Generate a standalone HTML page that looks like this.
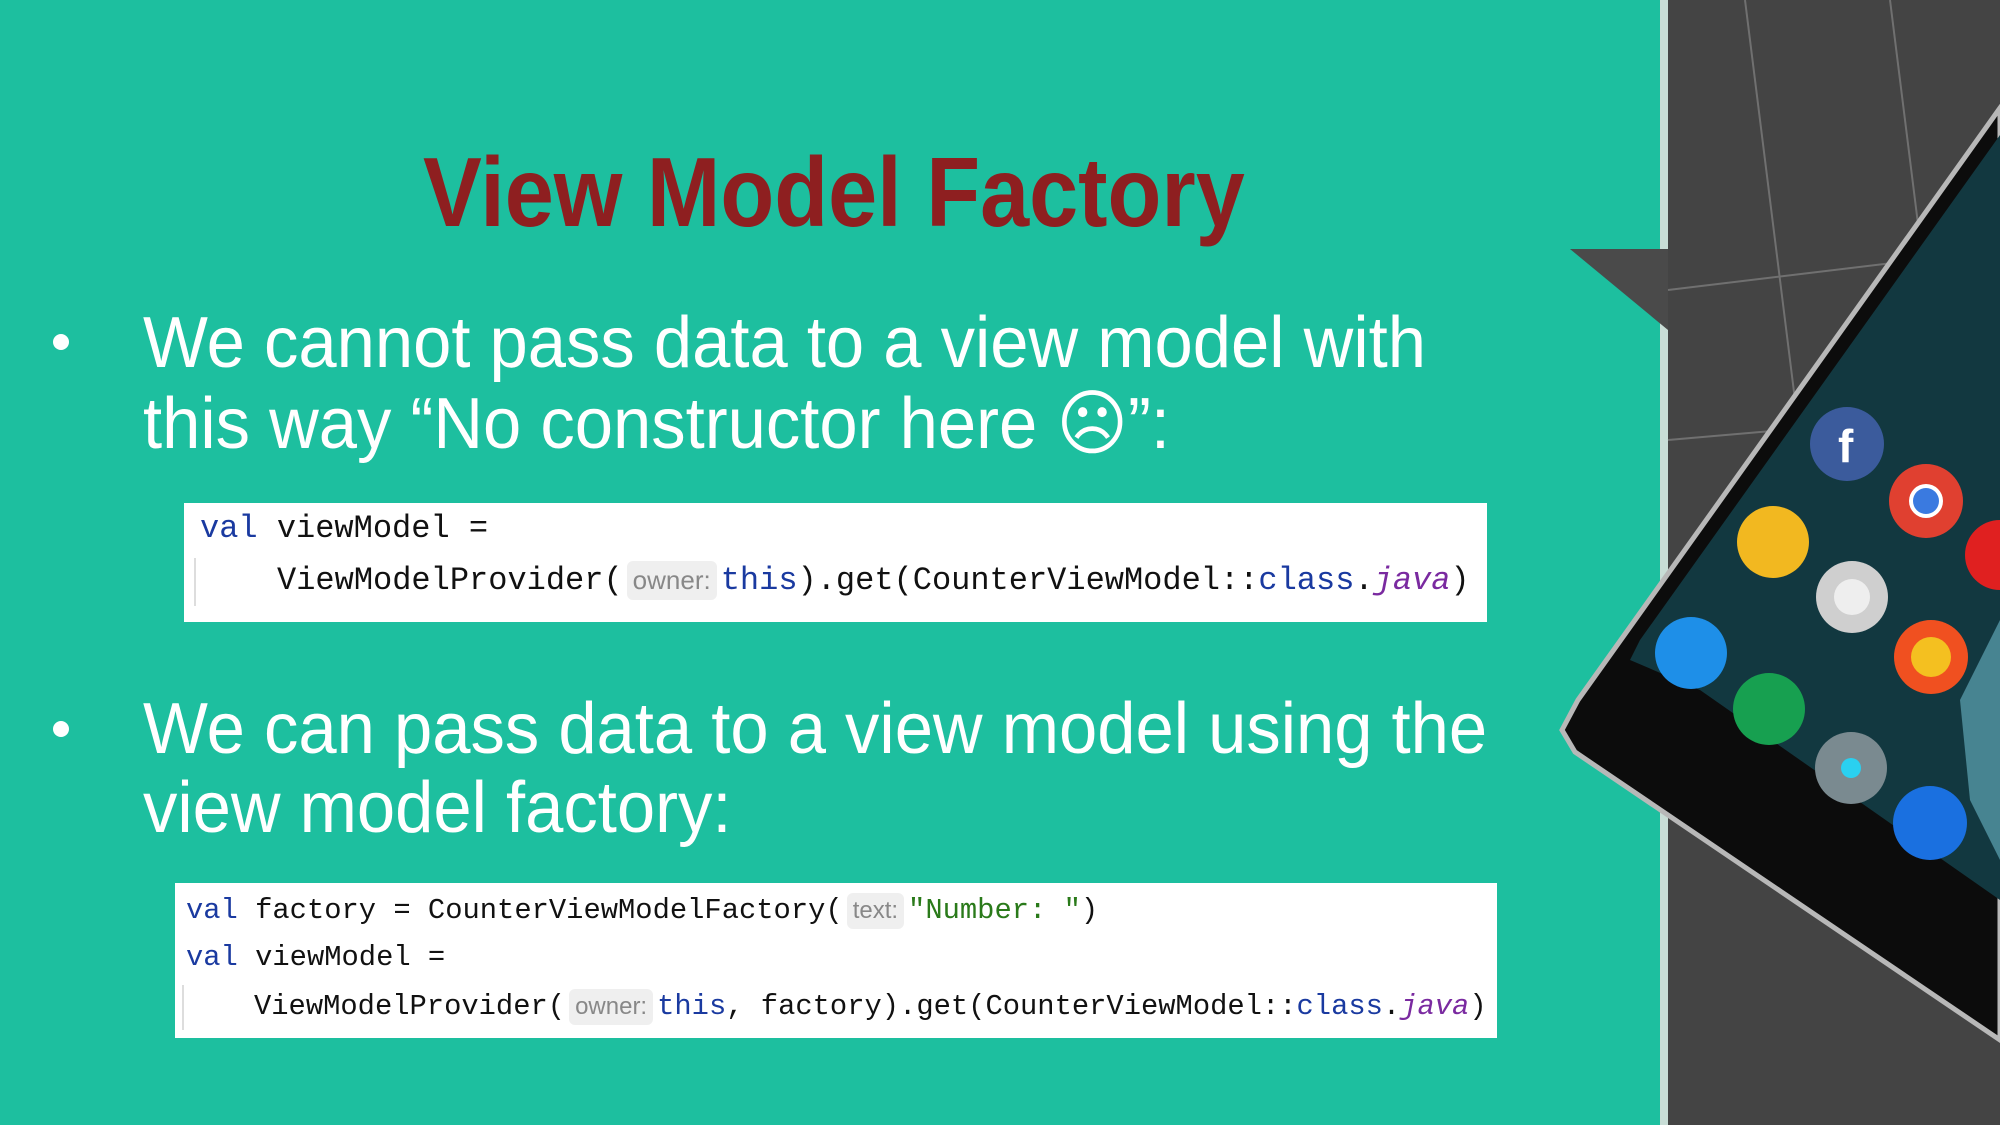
<!DOCTYPE html>
<html><head><meta charset="utf-8"><style>
html,body{margin:0;padding:0}
body{width:2000px;height:1125px;position:relative;overflow:hidden;background:#1dbf9f;font-family:"Liberation Sans",sans-serif}
.t{position:absolute;white-space:nowrap;transform-origin:left top}
.title{left:423px;top:136px;font-size:98px;font-weight:bold;color:#8e1f20;transform:scaleX(0.9)}
.b{font-size:72px;color:#fff;transform:scaleX(0.955)}
.dot{position:absolute;width:16px;height:16px;border-radius:50%;background:#fff}
.code{position:absolute;background:#fff}
.c{position:absolute;white-space:nowrap;font-family:"Liberation Mono",monospace;font-size:32px;color:#111}
.c2{font-size:28.8px}
.k{color:#1a3aa0}.j{color:#7a2aa0;font-style:italic}.s{color:#2a7a1a}
.h{display:inline-block;background:#efefef;color:#888;font-family:"Liberation Sans",sans-serif;font-size:26px;padding:4px 6px;border-radius:6px;margin:0 4px}
.c2 .h{font-size:24px}
</style></head><body>
<div class="t title">View Model Factory</div>
<div class="dot" style="left:53px;top:334px"></div>
<div class="t b" style="left:143px;top:302px">We cannot pass data to a view model with</div>
<div class="t b" style="left:143px;top:381px">this way “No constructor here ☹”:</div>
<div class="code" style="left:184px;top:503px;width:1303px;height:119px"></div>
<div class="c" style="left:200px;top:510px"><span class="k">val</span> viewModel =</div>
<div style="position:absolute;left:194px;top:558px;width:2px;height:48px;background:#ddd"></div>
<div class="c" style="left:277px;top:561px">ViewModelProvider(<span class="h">owner:</span><span class="k">this</span>).get(CounterViewModel::<span class="k">class</span>.<span class="j">java</span>)</div>
<div class="dot" style="left:53px;top:721px"></div>
<div class="t b" style="left:143px;top:688px">We can pass data to a view model using the</div>
<div class="t b" style="left:143px;top:767px">view model factory:</div>
<div class="code" style="left:175px;top:883px;width:1322px;height:155px"></div>
<div class="c c2" style="left:186px;top:893px"><span class="k">val</span> factory = CounterViewModelFactory(<span class="h">text:</span><span class="s">"Number: "</span>)</div>
<div class="c c2" style="left:186px;top:941px"><span class="k">val</span> viewModel =</div>
<div style="position:absolute;left:182px;top:985px;width:2px;height:45px;background:#ddd"></div>
<div class="c c2" style="left:254px;top:989px">ViewModelProvider(<span class="h">owner:</span><span class="k">this</span>, factory).get(CounterViewModel::<span class="k">class</span>.<span class="j">java</span>)</div>
<svg style="position:absolute;left:0;top:0" width="2000" height="1125">
<rect x="1660" y="0" width="340" height="1125" fill="#444"/>
<rect x="1660" y="0" width="8" height="1125" fill="#c8ddd6"/>
<polygon points="1570,249 1668,249 1668,330" fill="#4a4a4a"/>
<g stroke="#707070" stroke-width="2" fill="none"><line x1="1745" y1="0" x2="1820" y2="600"/><line x1="1890" y1="0" x2="1940" y2="400"/><line x1="1668" y1="290" x2="2000" y2="250"/><line x1="1668" y1="440" x2="1900" y2="420"/></g>
<polygon points="2000,108 1578,700 1562,730 1575,752 2000,1040" fill="#0c0c0c" stroke="#b8b8b8" stroke-width="5"/>
<polygon points="2000,135 1640,640 1630,660 1700,690 2000,900" fill="#123840"/>
<polygon points="2000,620 1960,700 1970,800 2000,860" fill="#6ab8c8" opacity=".6"/>
<circle cx="1847" cy="444" r="37" fill="#3b5b9c"/><text x="1838" y="462" font-family="Liberation Sans" font-weight="bold" font-size="46" fill="#fff">f</text>
<circle cx="1926" cy="501" r="37" fill="#e04030"/><circle cx="1926" cy="501" r="17" fill="#fff"/><circle cx="1926" cy="501" r="13" fill="#3a7ae0"/>
<circle cx="1773" cy="542" r="36" fill="#f2b820"/>
<circle cx="1852" cy="597" r="36" fill="#cfcfcf"/><circle cx="1852" cy="597" r="18" fill="#eee"/>
<circle cx="1691" cy="653" r="36" fill="#1e8fe8"/>
<circle cx="1931" cy="657" r="37" fill="#f05020"/><circle cx="1931" cy="657" r="20" fill="#f4c020"/>
<circle cx="1769" cy="709" r="36" fill="#17a050"/>
<circle cx="1851" cy="768" r="36" fill="#7a8a90"/><circle cx="1851" cy="768" r="10" fill="#2ad0f0"/>
<circle cx="1930" cy="823" r="37" fill="#1a70e0"/>
<circle cx="2000" cy="555" r="35" fill="#e02020"/>
</svg>
</body></html>
